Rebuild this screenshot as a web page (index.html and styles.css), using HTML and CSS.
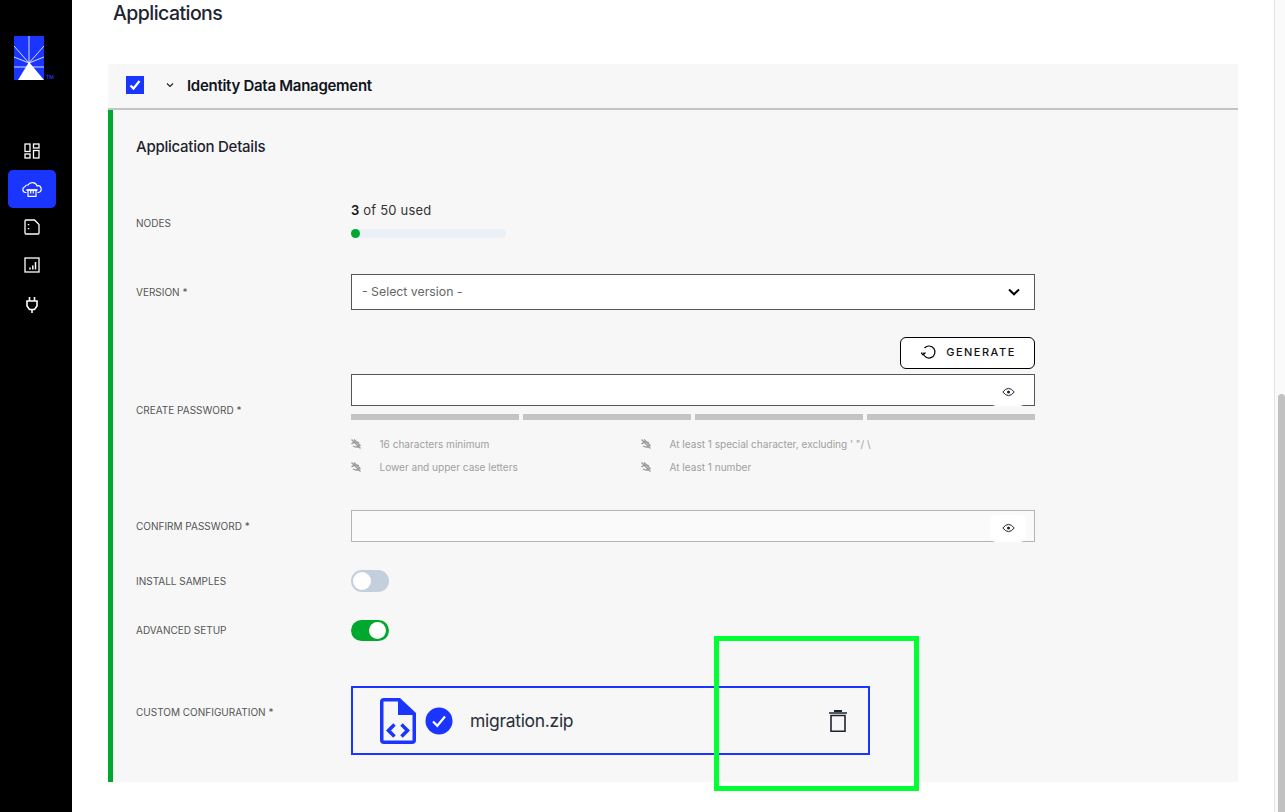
FILE: index.html
```html
<!DOCTYPE html>
<html lang="en">
<head>
<meta charset="UTF-8">
<meta name="viewport" content="width=device-width, initial-scale=1.0">
<title>Applications</title>
<link rel="stylesheet" href="styles.css">
</head>
<body>
<div class="app">
    <aside class="sidebar">
        <div class="logo">
            <svg class="logo-mark" width="30" height="44" viewBox="0 0 30 44">
                <rect width="30" height="44" fill="#1a35ff"/>
                <g stroke="#d8dcff" stroke-width="1" fill="none">
                    <path d="M15 0V28"/>
                    <path d="M15 27L30 10"/>
                    <path d="M15 27L0 10"/>
                    <path d="M15 27L30 21"/>
                    <path d="M15 27L0 21"/>
                    <path d="M0 31H30"/>
                </g>
                <path d="M15 26L30 44H4Z" fill="#fff"/>
            </svg>
            <span class="logo-tm">TM</span>
        </div>
        <nav class="nav">
            <a class="nav-item">
                <svg width="16" height="16" viewBox="0 0 16 16" fill="none" stroke="#fff" stroke-width="1.3">
                    <rect x="1" y="1" width="5" height="7.5"/><rect x="9.5" y="1" width="5.5" height="4"/>
                    <rect x="1" y="11" width="5" height="4"/><rect x="9.5" y="7.5" width="5.5" height="7.5"/>
                </svg>
            </a>
            <a class="nav-item active">
                <svg width="20" height="16" viewBox="0 0 20 16" fill="none" stroke="#fff" stroke-width="1.2">
                    <path d="M4.500 11.500H3.500A3 3 0 0 1 2.800 5.700A3.300 3.300 0 0 1 6 4A5 5 0 0 1 15 4.800A3.400 3.400 0 0 1 16.500 11.500H15.500"/>
                    <path d="M4.500 9H15.500" stroke-width="1.800"/>
                    <path d="M6 9V15.300H14V9M8.700 9V12.500M11.300 9V12.500"/>
                </svg>
            </a>
            <a class="nav-item">
                <svg width="16" height="16" viewBox="0 0 16 16" fill="none" stroke="#fff" stroke-width="1.3">
                    <path d="M2 1H10.500L15 5.500V14Q15 15 14 15H2Q1 15 1 14V2Q1 1 2 1Z"/>
                    <path d="M4.500 5V6.200M4.500 9V10.200" stroke-width="1.500"/>
                </svg>
            </a>
            <a class="nav-item">
                <svg width="16" height="16" viewBox="0 0 16 16" fill="none" stroke="#fff" stroke-width="1.3">
                    <rect x="1" y="1" width="14" height="14"/>
                    <path d="M6 10.500V12.500M8.800 8.500V12.500M11.500 5V12.500" stroke-width="1.500"/>
                </svg>
            </a>
            <a class="nav-item">
                <svg width="14" height="18" viewBox="0 0 14 18" fill="none" stroke="#fff" stroke-width="1.6">
                    <path d="M4.500 1V5M9.500 1V5"/>
                    <path d="M2 5H12V10L9.500 13.500H4.500L2 10Z"/>
                    <path d="M7 13.500V17"/>
                </svg>
            </a>
        </nav>
    </aside>

    <main class="main">
        <h1 class="page-title">Applications</h1>

        <section class="panel">
            <header class="panel-head">
                <span class="checkbox">
                    <svg width="14" height="14" viewBox="0 0 14 14" fill="none" stroke="#fff" stroke-width="2.200"><path d="M2.500 7.500L5.500 10.500L11.500 3"/></svg>
                </span>
                <svg class="caret" width="8" height="6" viewBox="0 0 8 6" fill="none" stroke="#1d2330" stroke-width="1.200"><path d="M1 1.500L4 4.500L7 1.500"/></svg>
                <span class="panel-name">Identity Data Management</span>
            </header>

            <div class="panel-body">
                <h2 class="section-title">Application Details</h2>

                <div class="row row-nodes">
                    <label class="row-label">Nodes</label>
                    <div>
                        <div class="usage"><b>3</b> of 50 used</div>
                        <div class="usage-bar"><span class="usage-fill"></span></div>
                    </div>
                </div>

                <div class="row row-version">
                    <label class="row-label">Version *</label>
                    <div class="select">
                        <span>- Select version -</span>
                        <svg width="12" height="8" viewBox="0 0 12 8" fill="none" stroke="#000" stroke-width="2"><path d="M1 1.500L6 6.300L11 1.500"/></svg>
                    </div>
                </div>

                <div class="row row-password">
                    <label class="row-label">Create password *</label>
                    <div>
                        <div class="generate-line">
                            <button class="generate">
                                <svg width="16" height="16" viewBox="0 0 16 16" fill="none" stroke="#000" stroke-width="1.200">
                                    <path d="M3.500 4A6 6 0 1 1 2 8.500"/>
                                    <path d="M0 8.500L2 11L4.500 8.500" stroke-width="1.100"/>
                                </svg>
                                <span>Generate</span>
                            </button>
                        </div>
                        <div class="field">
                            <span class="eye-box">
                                <svg class="eye" width="13" height="10" viewBox="0 0 13 10" fill="none" stroke="#1d2330" stroke-width="1"><path d="M.8 5Q6.500-2.200 12.200 5Q6.500 12.200.8 5Z"/><circle cx="6.500" cy="5" r="1.500" fill="#1d2330" stroke="none"/></svg>
                            </span>
                        </div>
                        <div class="strength"><span></span><span></span><span></span><span></span></div>
                        <ul class="hints">
                            <li><svg class="eye-off" width="10" height="10" viewBox="0 0 10 10" fill="none" stroke="#999" stroke-width="1.300"><path d="M.5 5Q4 1.500 8 4M2 7Q6 9.500 9.500 6M.5 .500L9.500 9.500M3 .500L9.500 7"/></svg>16 characters minimum</li>
                            <li><svg class="eye-off" width="10" height="10" viewBox="0 0 10 10" fill="none" stroke="#999" stroke-width="1.300"><path d="M.5 5Q4 1.500 8 4M2 7Q6 9.500 9.500 6M.5 .500L9.500 9.500M3 .500L9.500 7"/></svg>At least 1 special character, excluding ' "/ \</li>
                            <li><svg class="eye-off" width="10" height="10" viewBox="0 0 10 10" fill="none" stroke="#999" stroke-width="1.300"><path d="M.5 5Q4 1.500 8 4M2 7Q6 9.500 9.500 6M.5 .500L9.500 9.500M3 .500L9.500 7"/></svg>Lower and upper case letters</li>
                            <li><svg class="eye-off" width="10" height="10" viewBox="0 0 10 10" fill="none" stroke="#999" stroke-width="1.300"><path d="M.5 5Q4 1.500 8 4M2 7Q6 9.500 9.500 6M.5 .500L9.500 9.500M3 .500L9.500 7"/></svg>At least 1 number</li>
                        </ul>
                    </div>
                </div>

                <div class="row row-confirm">
                    <label class="row-label">Confirm password *</label>
                    <div class="field field-muted">
                        <span class="eye-box">
                            <svg class="eye" width="13" height="10" viewBox="0 0 13 10" fill="none" stroke="#1d2330" stroke-width="1"><path d="M.8 5Q6.500-2.200 12.200 5Q6.500 12.200.8 5Z"/><circle cx="6.500" cy="5" r="1.500" fill="#1d2330" stroke="none"/></svg>
                        </span>
                    </div>
                </div>

                <div class="row row-samples">
                    <label class="row-label">Install samples</label>
                    <span class="toggle"></span>
                </div>

                <div class="row row-advanced">
                    <label class="row-label">Advanced setup</label>
                    <span class="toggle on"></span>
                </div>

                <div class="row row-upload">
                    <label class="row-label">Custom configuration *</label>
                    <div class="upload">
                        <svg class="file-icon" width="36" height="46" viewBox="0 0 36 46">
                            <path d="M4 0H20L36 15V42Q36 46 32 46H4Q0 46 0 42V4Q0 0 4 0Z" fill="#1a35ff"/>
                            <path d="M3.500 3.500H18V17H32.500V42.500H3.500Z" fill="#f7f7f7"/>
                            <path d="M14.500 26.500L8.500 32.500L14.500 38.500M21.500 26.500L27.500 32.500L21.500 38.500" fill="none" stroke="#1a35ff" stroke-width="3.500"/>
                        </svg>
                        <svg class="check-icon" width="28" height="28" viewBox="0 0 28 28">
                            <circle cx="14" cy="14" r="13.500" fill="#1a35ff"/>
                            <path d="M8 14.500L12.300 18.800L20 9.500" fill="none" stroke="#fff" stroke-width="2.200"/>
                        </svg>
                        <span class="file-name">migration.zip</span>
                        <svg class="trash" width="18" height="22" viewBox="0 0 18 22" fill="none" stroke="#1d2330">
                            <path d="M0 3H18" stroke-width="1.500"/>
                            <path d="M5 1H13" stroke-width="2"/>
                            <path d="M2 5.500H16V21.200H2Z" stroke-width="1.600"/>
                        </svg>
                    </div>
                </div>
            </div>
        </section>
    </main>

    <div class="scrollbar"><span class="scroll-thumb"></span></div>
</div>
<div class="highlight"></div>
</body>
</html>
```

FILE: styles.css
```css
* {
    box-sizing: border-box;
}
html, body {
    height: 100%;
}
body {
    margin: 0;
    font-family: Inter, "Liberation Sans", sans-serif;
    color: #1d2330;
    background-color: #fff;
    overflow: hidden;
}
.app {
    display: flex;
    height: 812px;
}

/* sidebar */
.sidebar {
    flex: 0 0 72px;
    background-color: #000;
    padding: 36px 16px 0 8px;
}
.logo {
    display: flex;
    align-items: flex-end;
    padding-left: 6px;
    height: 44px;
}
.logo-mark {
    display: block;
    flex: none;
}
.logo-tm {
    font-size: 5px;
    font-weight: 600;
    line-height: 6px;
    margin-left: 2px;
    color: #1a35ff;
}
.nav {
    margin-top: 52px;
    display: flex;
    flex-direction: column;
}
.nav-item {
    height: 38px;
    display: flex;
    align-items: center;
    justify-content: center;
    border-radius: 5px;
}
.nav-item.active {
    background-color: #1a35ff;
}
.nav-item:last-child {
    margin-top: 2px;
}

/* main */
.main {
    flex: 1;
    padding: 0 47px 0 36px;
}
.page-title {
    margin: 0 0 0 5px;
    padding-top: 1px;
    font-size: 19.500px;
    line-height: 24px;
    font-weight: 500;
    letter-spacing: -0.55px;
}
.panel {
    margin-top: 39px;
    background-color: #f7f7f7;
}
.panel-head {
    height: 46px;
    padding: 0 18px 2px 18px;
    display: flex;
    align-items: center;
    border-bottom: 2px solid #c4c4c4;
}
.checkbox {
    width: 18px;
    height: 18px;
    background-color: #1a35ff;
    display: flex;
    align-items: center;
    justify-content: center;
}
.caret {
    margin-left: 22px;
}
.panel-name {
    margin-left: 13px;
    font-size: 15px;
    font-weight: 600;
    letter-spacing: -0.28px;
    color: #101420;
}
.panel-body {
    height: 672px;
    border-left: 5px solid #00a82d;
    padding: 28px 0 0 23px;
}
.section-title {
    margin: 0;
    font-size: 15px;
    line-height: 18px;
    font-weight: 500;
    letter-spacing: -0.25px;
}

/* form rows */
.row {
    display: grid;
    grid-template-columns: 215px 684px;
    align-items: center;
}
.row-label {
    font-size: 10px;
    line-height: 14px;
    text-transform: uppercase;
    color: #555;
}
.row-nodes {
    margin-top: 47px;
    align-items: start;
}
.row-nodes .row-label {
    margin-top: 13px;
}
.row-version {
    margin-top: 36px;
}
.row-password {
    margin-top: 27px;
    align-items: start;
}
.row-password .row-label {
    margin-top: 66px;
}
.row-confirm {
    margin-top: 36px;
}
.row-samples {
    margin-top: 28px;
}
.row-advanced {
    margin-top: 28px;
}
.row-advanced .row-label {
    padding-bottom: 1px;
}
.row-upload {
    margin-top: 45px;
    align-items: start;
}
.row-upload .row-label {
    margin-top: 19px;
}

.usage {
    font-size: 13px;
    line-height: 14px;
    letter-spacing: 0.2px;
    color: #333;
}
.usage b {
    color: #111;
    font-weight: 600;
}
.usage-bar {
    margin-top: 12px;
    width: 155px;
    height: 9px;
    border-radius: 5px;
    background-color: #ebf0f6;
}
.usage-fill {
    display: block;
    width: 9px;
    height: 9px;
    border-radius: 50%;
    background-color: #00a82d;
}
.select {
    height: 36px;
    padding: 0 14px 1px 10px;
    display: flex;
    align-items: center;
    justify-content: space-between;
    background-color: #fff;
    border: 1px solid #555;
    font-size: 12.300px;
    color: #666;
}
.generate-line {
    display: flex;
    justify-content: flex-end;
}
.generate {
    width: 135px;
    height: 32px;
    display: flex;
    align-items: center;
    justify-content: center;
    gap: 9px;
    padding: 0 0 2px 2px;
    background-color: #fff;
    border: 1px solid #000;
    border-radius: 6px;
    font-family: inherit;
    font-size: 11px;
    font-weight: 500;
    letter-spacing: 1.500px;
    text-transform: uppercase;
    color: #111;
}
.field {
    position: relative;
    height: 32px;
    background-color: #fff;
    border: 1px solid #555;
}
.generate-line + .field {
    margin-top: 5px;
}
.field-muted {
    background-color: #fafafa;
    border-color: #b5b5b5;
}
.eye-box {
    position: absolute;
    right: 8px;
    top: 4px;
    width: 36px;
    height: 27px;
    padding-bottom: 2px;
    background-color: #fff;
    border-radius: 6px;
    display: flex;
    align-items: center;
    justify-content: center;
}
.eye {
    display: block;
}
.strength {
    margin-top: 8px;
    display: grid;
    grid-template-columns: repeat(4, 1fr);
    gap: 4px;
}
.strength span {
    height: 6px;
    background-color: #c4c4c4;
}
.hints {
    list-style: none;
    margin: 17px 0 0 0;
    padding: 0;
    display: grid;
    grid-template-columns: 290px 1fr;
    row-gap: 9px;
    font-size: 10.050px;
    line-height: 14px;
    color: #a0a0a0;
}
.hints li {
    display: flex;
    align-items: center;
}
.eye-off {
    margin-right: 18.500px;
    flex: none;
}
.toggle {
    position: relative;
    display: block;
    width: 38px;
    height: 22px;
    border-radius: 11px;
    background-color: #c3cfdc;
}
.toggle::after {
    content: "";
    position: absolute;
    left: 2px;
    top: 2px;
    width: 18px;
    height: 18px;
    border-radius: 50%;
    background-color: #fff;
}
.toggle.on {
    height: 21px;
    background-color: #00a82d;
}
.toggle.on::after {
    left: 18px;
    top: 2px;
    width: 17px;
    height: 17px;
}
.upload {
    width: 519px;
    height: 69px;
    display: flex;
    align-items: center;
    padding: 0 21px 0 27px;
    border: 2px solid #1a35ff;
}
.check-icon {
    margin-left: 9px;
}
.file-name {
    margin-left: 17px;
    font-size: 17.500px;
    font-weight: 400;
    letter-spacing: -0.3px;
    color: #2a2f3a;
}
.trash {
    margin-left: auto;
}

.scrollbar {
    position: absolute;
    top: 0;
    right: 0;
    width: 11px;
    height: 812px;
    background-color: #fafafa;
    border-left: 1px solid #e4e4e4;
}
.scroll-thumb {
    position: absolute;
    top: 394px;
    left: 3px;
    width: 7px;
    height: 418px;
    border-radius: 4px 4px 0 0;
    background-color: #c1c1c1;
}

/* review annotation over the screenshot */
.highlight {
    position: absolute;
    left: 714px;
    top: 636px;
    width: 205px;
    height: 155px;
    border: 5px solid #00ff33;
}
```
